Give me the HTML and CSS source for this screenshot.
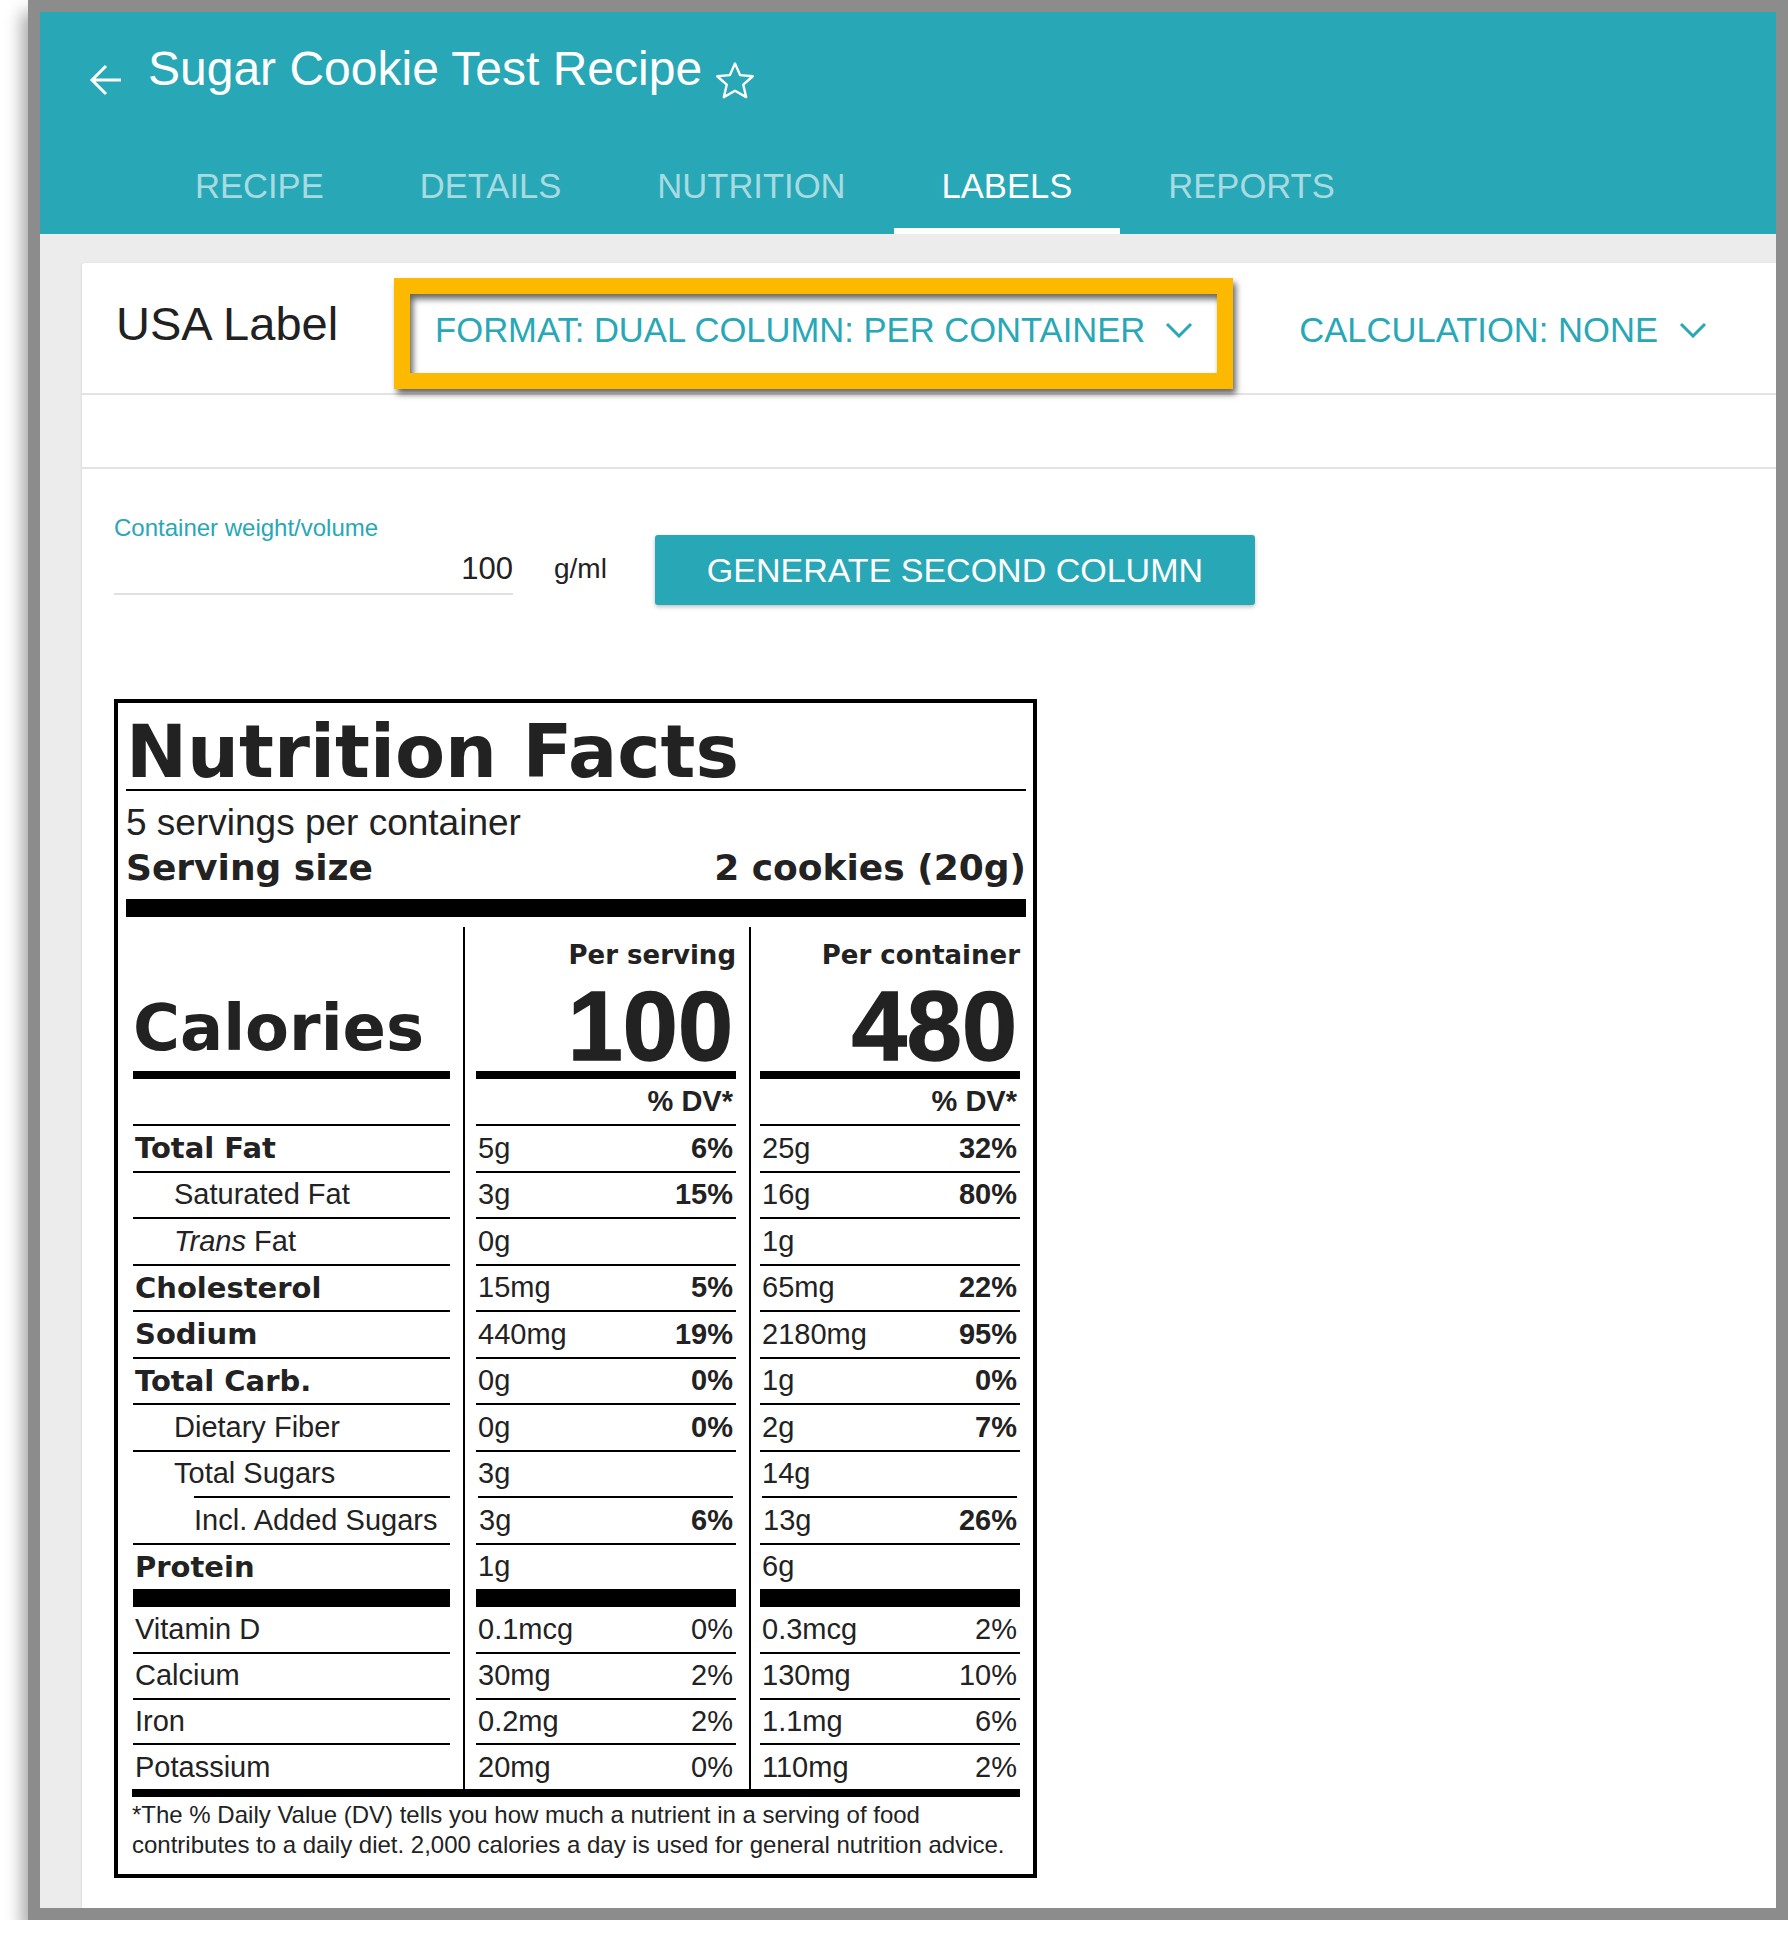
FILE: index.html
```html
<!DOCTYPE html>
<html lang="en">
<head>
    <meta charset="UTF-8">
    <title>Sugar Cookie Test Recipe - Labels</title>
    <link rel="stylesheet" href="styles.css">
</head>
<body>
<div class="frame">
    <div class="app">
        <header class="topbar">
            <div class="title-row">
                <svg class="back" viewBox="0 0 34 34"><path d="M32 17H3M17 3L3 17l14 14" fill="none" stroke="#fff" stroke-width="3"/></svg>
                <h1>Sugar Cookie Test Recipe</h1>
                <svg class="star" viewBox="0 0 24 24"><path d="M12 2.5l2.8 6.3 6.9.6-5.2 4.6 1.6 6.8L12 17.3l-6.1 3.5 1.6-6.8-5.2-4.6 6.9-.6z" fill="none" stroke="#fff" stroke-width="1.3" stroke-linejoin="round"/></svg>
            </div>
            <nav class="tabs">
                <a class="tab">RECIPE</a>
                <a class="tab">DETAILS</a>
                <a class="tab">NUTRITION</a>
                <a class="tab active">LABELS</a>
                <a class="tab">REPORTS</a>
            </nav>
        </header>

        <main class="page">
            <section class="card">
                <div class="card-head">
                    <h2>USA Label</h2>
                    <div class="highlight">
                        <button class="dropdown">FORMAT: DUAL COLUMN: PER CONTAINER
                            <svg class="chev" viewBox="0 0 28 16"><path d="M2 2l12 12 12-12" fill="none" stroke="currentColor" stroke-width="3"/></svg>
                        </button>
                    </div>
                    <button class="dropdown calc">CALCULATION: NONE
                        <svg class="chev" viewBox="0 0 28 16"><path d="M2 2l12 12 12-12" fill="none" stroke="currentColor" stroke-width="3"/></svg>
                    </button>
                </div>
                <div class="card-toolbar"></div>

                <div class="card-body">
                    <div class="container-row">
                        <div class="field">
                            <label for="weight">Container weight/volume</label>
                            <input type="text" id="weight" value="100">
                        </div>
                        <span class="unit">g/ml</span>
                        <button class="btn-generate">GENERATE SECOND COLUMN</button>
                    </div>

                    <div class="nf">
                        <div class="nf-title">Nutrition Facts</div>
                        <div class="nf-servings">5 servings per container</div>
                        <div class="nf-size"><span>Serving size</span><span>2 cookies (20g)</span></div>
                        <div class="nf-bar"></div>

                        <div class="nf-cols">
                            <div class="nf-col names">
                                <div class="nf-head"><span class="calories">Calories</span></div>
                                <div class="nf-row dv"></div>
                                <div class="nf-row b">Total Fat</div>
                                <div class="nf-row indent1">Saturated Fat</div>
                                <div class="nf-row indent1"><span><i>Trans</i> Fat</span></div>
                                <div class="nf-row b">Cholesterol</div>
                                <div class="nf-row b">Sodium</div>
                                <div class="nf-row b">Total Carb.</div>
                                <div class="nf-row indent1">Dietary Fiber</div>
                                <div class="nf-row indent1">Total Sugars</div>
                                <div class="nf-row indent2">Incl. Added Sugars</div>
                                <div class="nf-row b">Protein</div>
                                <div class="nf-row sep">Vitamin D</div>
                                <div class="nf-row minor">Calcium</div>
                                <div class="nf-row minor">Iron</div>
                                <div class="nf-row minor">Potassium</div>
                            </div>

                            <div class="nf-col amounts">
                                <div class="nf-head"><span class="per">Per serving</span><span class="big">100</span></div>
                                <div class="nf-row dv"><span></span><span class="pct">% DV*</span></div>
                                <div class="nf-row"><span>5g</span><span class="pct">6%</span></div>
                                <div class="nf-row"><span>3g</span><span class="pct">15%</span></div>
                                <div class="nf-row"><span>0g</span></div>
                                <div class="nf-row"><span>15mg</span><span class="pct">5%</span></div>
                                <div class="nf-row"><span>440mg</span><span class="pct">19%</span></div>
                                <div class="nf-row"><span>0g</span><span class="pct">0%</span></div>
                                <div class="nf-row"><span>0g</span><span class="pct">0%</span></div>
                                <div class="nf-row"><span>3g</span></div>
                                <div class="nf-row inset"><span>3g</span><span class="pct">6%</span></div>
                                <div class="nf-row"><span>1g</span></div>
                                <div class="nf-row sep"><span>0.1mcg</span><span>0%</span></div>
                                <div class="nf-row minor"><span>30mg</span><span>2%</span></div>
                                <div class="nf-row minor"><span>0.2mg</span><span>2%</span></div>
                                <div class="nf-row minor"><span>20mg</span><span>0%</span></div>
                            </div>

                            <div class="nf-col amounts last">
                                <div class="nf-head"><span class="per">Per container</span><span class="big">480</span></div>
                                <div class="nf-row dv"><span></span><span class="pct">% DV*</span></div>
                                <div class="nf-row"><span>25g</span><span class="pct">32%</span></div>
                                <div class="nf-row"><span>16g</span><span class="pct">80%</span></div>
                                <div class="nf-row"><span>1g</span></div>
                                <div class="nf-row"><span>65mg</span><span class="pct">22%</span></div>
                                <div class="nf-row"><span>2180mg</span><span class="pct">95%</span></div>
                                <div class="nf-row"><span>1g</span><span class="pct">0%</span></div>
                                <div class="nf-row"><span>2g</span><span class="pct">7%</span></div>
                                <div class="nf-row"><span>14g</span></div>
                                <div class="nf-row inset"><span>13g</span><span class="pct">26%</span></div>
                                <div class="nf-row"><span>6g</span></div>
                                <div class="nf-row sep"><span>0.3mcg</span><span>2%</span></div>
                                <div class="nf-row minor"><span>130mg</span><span>10%</span></div>
                                <div class="nf-row minor"><span>1.1mg</span><span>6%</span></div>
                                <div class="nf-row minor"><span>110mg</span><span>2%</span></div>
                            </div>
                        </div>

                        <div class="nf-foot-bar"></div>
                        <p class="nf-note">*The % Daily Value (DV) tells you how much a nutrient in a serving of food<br>contributes to a daily diet. 2,000 calories a day is used for general nutrition advice.</p>
                    </div>
                </div>
            </section>
        </main>
    </div>
</div>
</body>
</html>
```

FILE: styles.css
```css
body {
    margin: 0;
    background: #fff;
    font-family: "Liberation Sans", Arial, sans-serif;
    color: #222;
}
.frame {
    margin-left: 28px;
    width: 1736px;
    height: 1896px;
    border: 12px solid #8c8c8c;
    box-shadow: -6px 12px 16px rgba(0, 0, 0, 0.35);
    overflow: hidden;
}
.app {
    height: 100%;
    background: #ececec;
    display: flex;
    flex-direction: column;
}

/* header */
.topbar {
    background: #28a7b6;
    height: 222px;
    color: #fff;
}
.title-row {
    display: flex;
    align-items: flex-end;
    height: 138px;
    box-sizing: border-box;
    padding-bottom: 53px;
}
.back {
    width: 34px;
    height: 34px;
    margin-left: 49px;
}
.title-row h1 {
    margin: 0 0 0 25px;
    font-size: 48px;
    font-weight: 400;
    line-height: 56px;
}
.star {
    width: 44px;
    height: 44px;
    margin: 0 0 -6px 11px;
}
.tabs {
    display: flex;
    padding-left: 107px;
    height: 84px;
}
.tab {
    box-sizing: border-box;
    height: 84px;
    padding: 14px 48px 0;
    font-size: 34.6px;
    line-height: 44px;
    color: rgba(255, 255, 255, 0.6);
}
.tab.active {
    color: #fff;
    border-bottom: 6px solid #fff;
}

/* card */
.page {
    flex: 1;
    box-sizing: border-box;
    padding: 29px 0 0 42px;
}
.card {
    height: 100%;
    background: #fff;
    border-radius: 3px 0 0 0;
    box-shadow: 0 1px 3px rgba(0, 0, 0, 0.12);
}
.card-head {
    display: flex;
    align-items: flex-start;
    height: 130px;
    border-bottom: 2px solid #e3e3e3;
}
.card-head h2 {
    margin: 33px 0 0 34px;
    font-size: 47px;
    font-weight: 400;
    line-height: 56px;
    color: #212121;
}
.highlight {
    position: relative;
    margin: 15px 0 0 56px;
    padding: 16px;
}
.highlight::after {
    content: "";
    position: absolute;
    top: 0;
    left: 0;
    right: 0;
    bottom: 0;
    border: 16px solid #fcb900;
    filter: drop-shadow(3px 5px 3px rgba(0, 0, 0, 0.6));
    pointer-events: none;
}
.dropdown {
    display: flex;
    align-items: center;
    gap: 20px;
    padding: 16px 24px 23px 25px;
    background: none;
    border: 0;
    font-family: "Liberation Sans", Arial, sans-serif;
    font-size: 34.6px;
    line-height: 40px;
    color: #28a7b6;
}
.dropdown.calc {
    margin: 31px 0 0 41px;
    gap: 21px;
}
.chev {
    width: 28px;
    height: 16px;
}
.card-toolbar {
    height: 72px;
    border-bottom: 2px solid #e3e3e3;
}
.card-body {
    padding: 45px 32px 0;
}

/* container weight */
.container-row {
    display: flex;
    align-items: flex-start;
}
.field {
    width: 399px;
}
.field label {
    display: block;
    font-size: 24px;
    line-height: 28px;
    color: #28a7b6;
}
.field input {
    display: block;
    width: 100%;
    box-sizing: border-box;
    height: 44px;
    margin-top: 9px;
    padding: 0 0 6px;
    border: 0;
    border-bottom: 2px solid #e0e0e0;
    background: transparent;
    text-align: right;
    font-family: "Liberation Sans", Arial, sans-serif;
    font-size: 31px;
    line-height: 36px;
    color: #222;
}
.unit {
    margin: 39px 0 0 41px;
    font-size: 28px;
    line-height: 32px;
}
.btn-generate {
    margin: 21px 0 0 48px;
    width: 600px;
    height: 70px;
    background: #28a7b6;
    color: #fff;
    border: 0;
    border-radius: 3px;
    box-shadow: 0 2px 4px rgba(0, 0, 0, 0.25);
    font-family: "Liberation Sans", Arial, sans-serif;
    font-size: 34px;
}

/* nutrition facts label */
.nf {
    width: 900px;
    margin-top: 94px;
    border: 4px solid #000;
    padding: 12px 7px 14px 8px;
    color: #222;
}
.nf-title {
    font-family: "DejaVu Sans", sans-serif;
    font-weight: 700;
    font-size: 73px;
    line-height: 74px;
    border-bottom: 2px solid #000;
}
.nf-servings {
    margin-top: 12px;
    font-size: 37px;
    line-height: 40px;
}
.nf-size {
    display: flex;
    justify-content: space-between;
    margin-top: 5px;
    font-family: "DejaVu Sans", sans-serif;
    font-weight: 700;
    font-size: 36px;
    line-height: 40px;
}
.nf-bar {
    height: 18px;
    margin-top: 11px;
    background: #000;
}
.nf-cols {
    display: flex;
    margin-top: 10px;
}
.nf-col {
    display: flex;
    flex-direction: column;
    box-sizing: border-box;
}
.nf-col.names {
    width: 337px;
    padding: 0 13px 0 7px;
}
.nf-col.amounts {
    width: 286px;
    border-left: 2px solid #000;
    padding: 0 13px 0 11px;
}
.nf-col.amounts.last {
    width: 277px;
    padding: 0 6px 0 9px;
}
.nf-head {
    height: 144px;
    box-sizing: border-box;
    display: flex;
    flex-direction: column;
    align-items: flex-end;
    padding-top: 13px;
}
.names .nf-head {
    justify-content: flex-end;
    align-items: flex-start;
    padding: 0 0 11px;
}
.calories {
    font-family: "DejaVu Sans", sans-serif;
    font-weight: 700;
    font-size: 64px;
    line-height: 64px;
}
.per {
    font-family: "DejaVu Sans", sans-serif;
    font-weight: 700;
    font-size: 26px;
    line-height: 30px;
}
.big {
    margin-top: auto;
    padding-right: 3px;
    font-weight: 700;
    font-size: 99px;
    line-height: 90px;
    -webkit-text-stroke: 1.5px #222;
}
.nf-row {
    display: flex;
    align-items: center;
    justify-content: space-between;
    box-sizing: border-box;
    height: 46.5px;
    padding: 0 3px 0 2px;
    border-top: 2px solid #000;
    font-size: 29px;
    white-space: nowrap;
}
.nf-row.dv {
    height: 53px;
    border-top-width: 8px;
}
.nf-row.sep {
    height: 63px;
    border-top-width: 18px;
}
.nf-row.minor {
    height: 45.7px;
}
.nf-row.b {
    font-family: "DejaVu Sans", sans-serif;
    font-weight: 700;
}
.nf-row.indent1 {
    padding-left: 41px;
}
.nf-row.indent2 {
    margin-left: 61px;
    padding-left: 0;
}
.nf-row.inset {
    margin: 0 3px 0 2px;
    padding: 0 0 0 1px;
}
.pct {
    font-weight: 700;
}
.nf-foot-bar {
    height: 8px;
    margin: 0 6px;
    background: #000;
}
.nf-note {
    margin: 3px 0 0;
    padding-left: 6px;
    font-size: 24px;
    line-height: 30px;
}
```
